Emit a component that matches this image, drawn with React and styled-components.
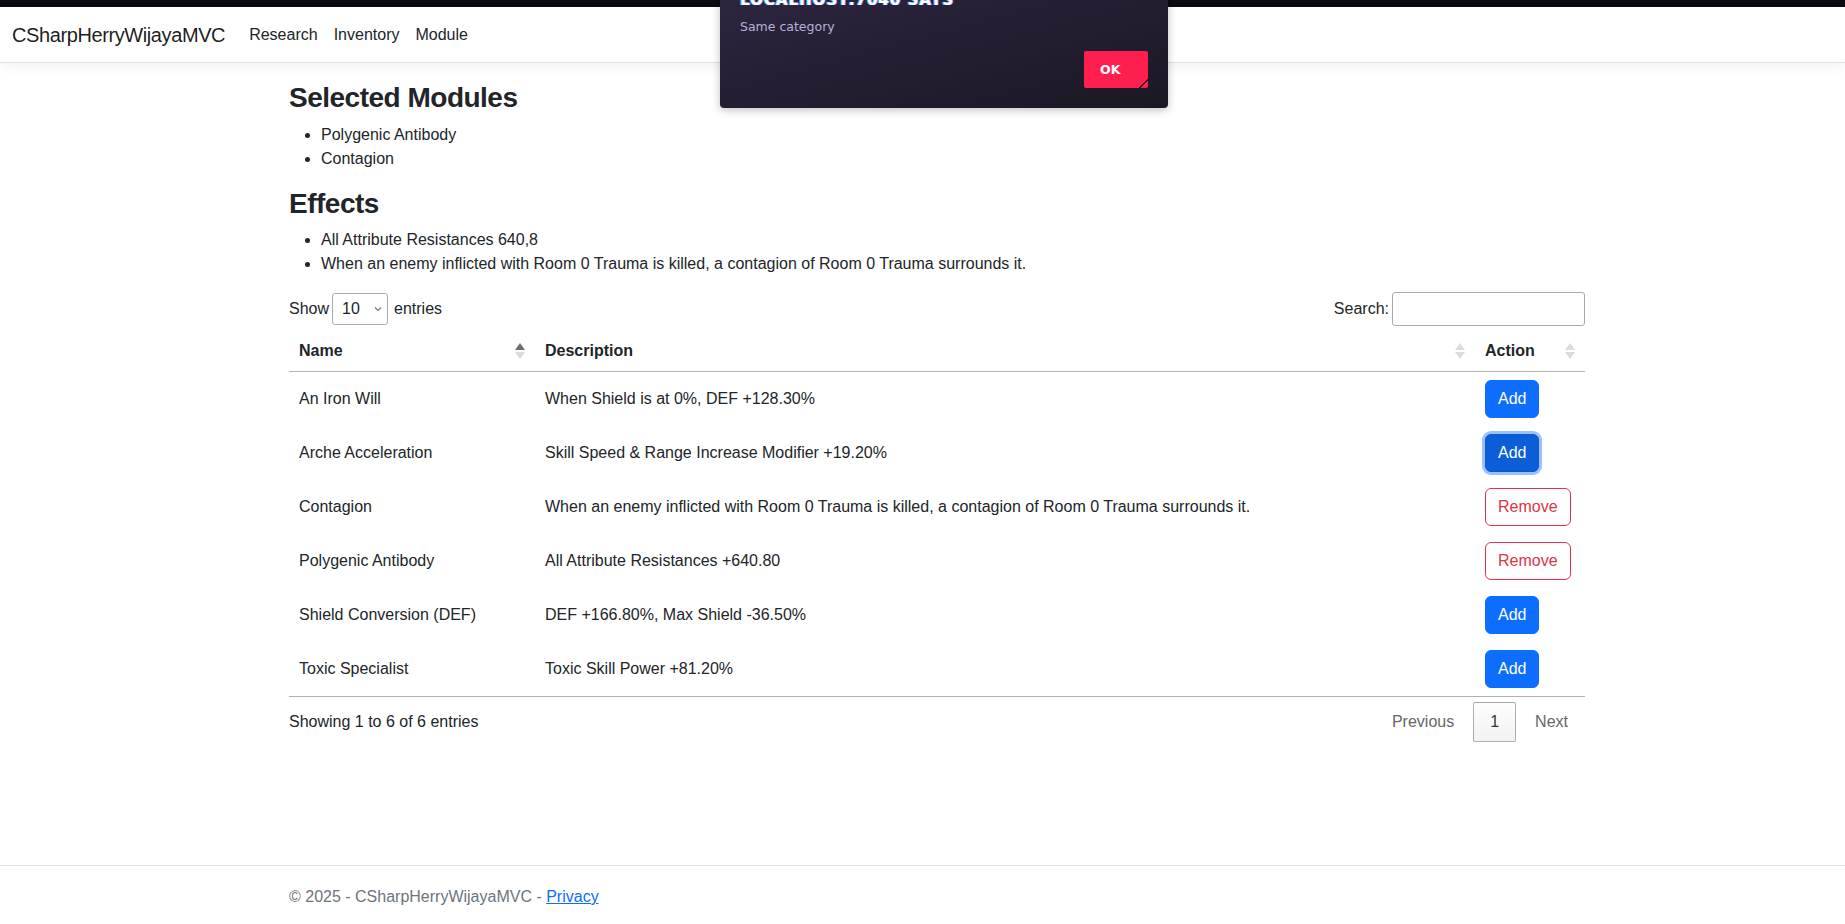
import styled, { createGlobalStyle, css } from "styled-components"

const GlobalStyle = createGlobalStyle`
  html, body {
    margin: 0;
    padding: 0;
  }
  body {
    font-family: "Liberation Sans", Arial, sans-serif;
    font-size: 16px;
    line-height: 1.5;
    color: #212529;
    background: #fff;
  }
  * { box-sizing: border-box; }
`

const Page = styled.div`
  position: relative;
  min-height: 100vh;
  display: flex;
  flex-direction: column;
  overflow: hidden;
`
const TopBar = styled.div`
  height: 7px;
  background: #0b0b10;
`
const Navbar = styled.nav`
  height: 56px;
  display: flex;
  align-items: center;
  padding: 0 12px;
  background: #fff;
  border-bottom: 1px solid #dee2e6;
  box-shadow: 0 4px 12px rgba(0, 0, 0, 0.05);
`
const Brand = styled.a`
  font-size: 20px;
  letter-spacing: -0.4px;
  color: rgba(0, 0, 0, 0.9);
  margin-right: 16px;
  text-decoration: none;
`
const NavLink = styled.a`
  padding: 8px;
  color: #212529;
  text-decoration: none;
`
const Shell = styled.div`
  padding-left: 29px;
`
const Container = styled.div`
  max-width: 1296px;
  margin: 0 auto;
`
const Main = styled.main`
  margin-top: 18px;
`
const Heading = styled.h3`
  font-size: 28px;
  font-weight: 700;
  letter-spacing: -0.5px;
  line-height: 1.2;
  margin: 0 0 8px;
`
const List = styled.ul`
  margin: 0 0 16px;
  padding-left: 32px;
`
const Toolbar = styled.div`
  display: flex;
  justify-content: space-between;
  align-items: center;
`
const Label = styled.label`
  display: flex;
  align-items: center;
  gap: 3px;
`
const SelectWrap = styled.span`
  position: relative;
  display: inline-flex;
  margin: 0 3px 0 0;
  svg {
    position: absolute;
    right: 6px;
    top: 50%;
    transform: translateY(-50%);
    pointer-events: none;
  }
`
const Select = styled.select`
  appearance: none;
  width: 56px;
  height: 32px;
  padding: 0 0 0 9px;
  border: 1px solid #aaa;
  border-radius: 3px;
  background: #fff;
  font: inherit;
  color: #212529;
`
const SearchInput = styled.input`
  width: 193px;
  height: 34px;
  border: 1px solid #aaa;
  border-radius: 3px;
  padding: 5px;
  background: transparent;
  font: inherit;
`
const Table = styled.table`
  width: 100%;
  table-layout: fixed;
  border-collapse: collapse;
  margin-top: 5px;
  border-bottom: 1px solid rgba(0, 0, 0, 0.3);
`
const Th = styled.th`
  text-align: left;
  font-weight: 700;
  padding: 8px 10px;
  border-bottom: 1px solid rgba(0, 0, 0, 0.3);
`
const ThInner = styled.div`
  display: flex;
  justify-content: space-between;
  align-items: center;
`
const Td = styled.td`
  padding: 8px 10px;
  vertical-align: middle;
  height: 54px;
`
const Sorter = styled.span`
  display: flex;
  flex-direction: column;
  gap: 2px;
`
const Tri = styled.span`
  width: 0;
  height: 0;
  border-left: 5px solid transparent;
  border-right: 5px solid transparent;
  ${(p) =>
    p.$down
      ? css`border-top: 7px solid ${p.$on ? "#6e6e6e" : "#dcdcdc"};`
      : css`border-bottom: 7px solid ${p.$on ? "#6e6e6e" : "#dcdcdc"};`}
`
const Button = styled.button`
  font: inherit;
  line-height: 24px;
  padding: 6px 12px;
  border-radius: 6px;
  border: 1px solid;
  cursor: pointer;
  ${(p) =>
    p.$variant === "danger"
      ? css`
          background: transparent;
          color: #dc3545;
          border-color: #dc3545;
        `
      : css`
          background: ${p.$focused ? "#0b5ed7" : "#0d6efd"};
          color: #fff;
          border-color: ${p.$focused ? "#0a58ca" : "#0d6efd"};
          box-shadow: ${p.$focused ? "0 0 0 3px rgba(49, 132, 253, 0.5)" : "none"};
        `}
`
const Bottom = styled.div`
  display: flex;
  justify-content: space-between;
  align-items: flex-start;
`
const Info = styled.div`
  padding-top: 13px;
`
const Pager = styled.div`
  display: flex;
  padding-top: 5px;
  gap: 2px;
`
const PageBtn = styled.span`
  padding: 7px 16px;
  line-height: 24px;
  min-width: 24px;
  border-radius: 2px;
  border: 1px solid ${(p) => (p.$current ? "rgba(0, 0, 0, 0.3)" : "transparent")};
  color: ${(p) => (p.$current ? "#333" : "#666")};
  background: ${(p) =>
    p.$current ? "linear-gradient(to bottom, rgba(230,230,230,0.05) 0%, rgba(0,0,0,0.05) 100%)" : "transparent"};
`
const Footer = styled.footer`
  margin-top: auto;
  border-top: 1px solid #dee2e6;
  padding: 19px 0 15px;
  color: #6c757d;
  white-space: nowrap;
`
const FooterLink = styled.a`
  color: #0d6efd;
  text-decoration: underline;
`

const Dialog = styled.div`
  position: absolute;
  top: -22px;
  left: 720px;
  width: 448px;
  height: 130px;
  padding: 12px 20px 20px;
  display: flex;
  flex-direction: column;
  background: linear-gradient(165deg, #2f2742 0%, #251f34 45%, #1b1824 100%);
  border-radius: 0 0 4px 4px;
  box-shadow: 0 2px 8px rgba(0, 0, 0, 0.25);
  font-family: "DejaVu Sans", "Liberation Sans", sans-serif;
`
const DialogTitle = styled.div`
  font-size: 15px;
  font-weight: 700;
  line-height: 20px;
  letter-spacing: 1px;
  color: #fff;
  text-shadow: -1px 0 #3ab8ff, 1px 0 #b79bff;
`
const DialogText = styled.div`
  margin-top: 8px;
  font-size: 12.5px;
  line-height: 18px;
  color: #b8b1d6;
`
const DialogActions = styled.div`
  margin-top: auto;
  display: flex;
  justify-content: flex-end;
`
const OkButton = styled.button`
  position: relative;
  width: 64px;
  height: 37px;
  padding: 0 0 0 16px;
  text-align: left;
  border: none;
  border-radius: 2px;
  background: #ff1f4f;
  color: #fff;
  font-family: "DejaVu Sans", sans-serif;
  font-size: 12.5px;
  font-weight: 700;
  &::after {
    content: "";
    position: absolute;
    right: 0;
    bottom: 0;
    width: 9px;
    height: 9px;
    background: linear-gradient(135deg, transparent 45%, #3a1020 48%, #3a1020 56%, transparent 59%);
  }
`

const rows = [
  { name: "An Iron Will", desc: "When Shield is at 0%, DEF +128.30%", action: "add" },
  { name: "Arche Acceleration", desc: "Skill Speed & Range Increase Modifier +19.20%", action: "add", focused: true },
  { name: "Contagion", desc: "When an enemy inflicted with Room 0 Trauma is killed, a contagion of Room 0 Trauma surrounds it.", action: "remove" },
  { name: "Polygenic Antibody", desc: "All Attribute Resistances +640.80", action: "remove" },
  { name: "Shield Conversion (DEF)", desc: "DEF +166.80%, Max Shield -36.50%", action: "add" },
  { name: "Toxic Specialist", desc: "Toxic Skill Power +81.20%", action: "add" },
]

const SortIcon = ({ up }) => (
  <Sorter>
    <Tri $on={up} />
    <Tri $down />
  </Sorter>
)

const App = () => {
  return (
    <Page>
      <GlobalStyle />
      <TopBar />
      <Navbar>
        <Brand href="#">CSharpHerryWijayaMVC</Brand>
        <NavLink href="#">Research</NavLink>
        <NavLink href="#">Inventory</NavLink>
        <NavLink href="#">Module</NavLink>
      </Navbar>

      <Shell>
        <Container>
          <Main>
            <Heading>Selected Modules</Heading>
            <List>
              <li>Polygenic Antibody</li>
              <li>Contagion</li>
            </List>
            <Heading>Effects</Heading>
            <List>
              <li>All Attribute Resistances 640,8</li>
              <li>When an enemy inflicted with Room 0 Trauma is killed, a contagion of Room 0 Trauma surrounds it.</li>
            </List>

            <Toolbar>
              <Label>
                Show
                <SelectWrap>
                  <Select defaultValue="10">
                    <option>10</option>
                    <option>25</option>
                    <option>50</option>
                    <option>100</option>
                  </Select>
                  <svg width="8" height="5" viewBox="0 0 8 5">
                    <path d="M1 1l3 3 3-3" fill="none" stroke="#777" strokeWidth="1.2" />
                  </svg>
                </SelectWrap>
                entries
              </Label>
              <Label>
                Search:
                <SearchInput type="search" />
              </Label>
            </Toolbar>

            <Table>
              <colgroup>
                <col style={{ width: 246 }} />
                <col style={{ width: 940 }} />
                <col style={{ width: 110 }} />
              </colgroup>
              <thead>
                <tr>
                  <Th>
                    <ThInner>Name<SortIcon up /></ThInner>
                  </Th>
                  <Th>
                    <ThInner>Description<SortIcon /></ThInner>
                  </Th>
                  <Th>
                    <ThInner>Action<SortIcon /></ThInner>
                  </Th>
                </tr>
              </thead>
              <tbody>
                {rows.map((r) => (
                  <tr key={r.name}>
                    <Td>{r.name}</Td>
                    <Td>{r.desc}</Td>
                    <Td>
                      {r.action === "add" ? (
                        <Button $focused={r.focused}>Add</Button>
                      ) : (
                        <Button $variant="danger">Remove</Button>
                      )}
                    </Td>
                  </tr>
                ))}
              </tbody>
            </Table>

            <Bottom>
              <Info>Showing 1 to 6 of 6 entries</Info>
              <Pager>
                <PageBtn>Previous</PageBtn>
                <PageBtn $current>1</PageBtn>
                <PageBtn>Next</PageBtn>
              </Pager>
            </Bottom>
          </Main>
        </Container>
      </Shell>

      <Footer>
        <Shell>
          <Container>
            © 2025 - CSharpHerryWijayaMVC - <FooterLink href="#">Privacy</FooterLink>
          </Container>
        </Shell>
      </Footer>

      <Dialog>
        <DialogTitle>LOCALHOST:7040 SAYS</DialogTitle>
        <DialogText>Same category</DialogText>
        <DialogActions>
          <OkButton>OK</OkButton>
        </DialogActions>
      </Dialog>
    </Page>
  )
}

export default App
